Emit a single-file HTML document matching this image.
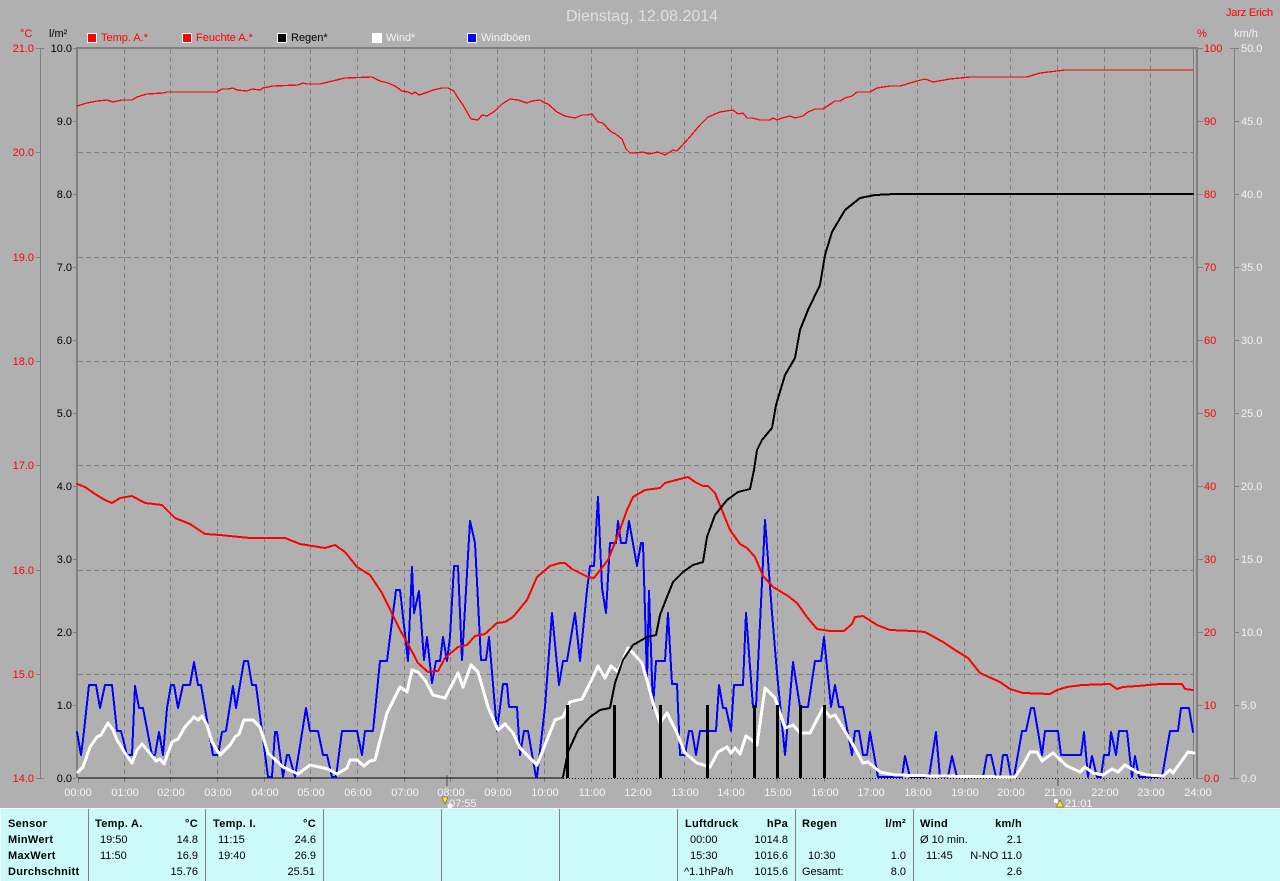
<!DOCTYPE html>
<html><head><meta charset="utf-8"><style>
html,body{margin:0;padding:0;background:#b0b0b0}
svg{display:block}
text{font-family:"Liberation Sans",sans-serif;font-size:11px}
.w{fill:#f4f4f4}.r{fill:#f00}.k{fill:#000}
.e{text-anchor:end}.b{font-weight:bold;letter-spacing:.3px}
.c{fill:none;stroke-linejoin:round;stroke-linecap:round}
</style></head><body>
<svg width="1280" height="881" viewBox="0 0 1280 881" xmlns="http://www.w3.org/2000/svg">
<rect width="1280" height="881" fill="#b0b0b0"/>
<!-- grid -->
<g stroke="#808080" stroke-width="1" stroke-dasharray="5,3" shape-rendering="crispEdges" fill="none">
<path d="M78 152.5H1193M78 257.5H1193M78 361.5H1193M78 465.5H1193M78 570.5H1193M78 674.5H1193"/>
<path d="M124.5 49V785M170.5 49V785M217.5 49V785M264.5 49V785M310.5 49V785M357.5 49V785M404.5 49V785M450.5 49V785M497.5 49V785M544.5 49V785M591.5 49V785M637.5 49V785M684.5 49V785M731.5 49V785M777.5 49V785M824.5 49V785M870.5 49V785M917.5 49V785M964.5 49V785M1010.5 49V785M1104.5 49V785M1150.5 49V785M1057.5 49V778M78.5 778V785"/>
</g>
<g fill="#808080" shape-rendering="crispEdges">
<rect x="76" y="47" width="1122" height="2"/><rect x="76" y="47" width="2" height="731"/>
<rect x="1193" y="48" width="1" height="730"/><rect x="1196" y="47" width="2" height="732"/>
<rect x="446" y="775" width="2" height="11"/><rect x="1057" y="778" width="2" height="8"/>
<rect x="40" y="48" width="1" height="730"/><rect x="1234" y="48" width="1" height="730"/>
</g>
<g stroke="#808080" stroke-width="1" shape-rendering="crispEdges" fill="none">
<path d="M36 48.5H44M36 778.5H44M36 152.5H40M36 257.5H40M36 361.5H40M36 465.5H40M36 570.5H40M36 674.5H40"/>
<path d="M73 48.5H76M73 121.5H76M73 194.5H76M73 267.5H76M73 340.5H76M73 413.5H76M73 486.5H76M73 559.5H76M73 632.5H76M73 705.5H76M73 778.5H76"/>
<path d="M1198 48.5H1203M1198 121.5H1203M1198 194.5H1203M1198 267.5H1203M1198 340.5H1203M1198 413.5H1203M1198 486.5H1203M1198 559.5H1203M1198 632.5H1203M1198 705.5H1203M1198 778.5H1203"/>
<path d="M1230 48.5H1239M1235 121.5H1239M1235 194.5H1239M1235 267.5H1239M1235 340.5H1239M1235 413.5H1239M1235 486.5H1239M1235 559.5H1239M1235 632.5H1239M1235 705.5H1239M1230 778.5H1239"/>
</g>
<!-- baseline -->
<path d="M78 778H563" stroke="#000" stroke-width="1.4" shape-rendering="crispEdges"/>
<path d="M563 778.5H1193" stroke="#000" stroke-width="1" stroke-dasharray="1,2" shape-rendering="crispEdges"/>
<!-- blue gust -->
<polyline class="c" stroke="#0000ff" stroke-width="2" shape-rendering="crispEdges" points="77,732 81,755 83,740 89,685 96,685 100,708 105,685 112,685 117,731 121,731 127,755 132,755 135,686 139,708 143,708 152,755 155,755 159,732 163,755 167,708 171,685 174,685 178,708 183,685 190,685 194,662 198,685 201,685 213,755 218,755 222,732 226,731 233,686 236,708 244,661 248,661 252,685 256,685 268,777 272,777 275,732 277,732 283,777 287,755 289,755 295,777 306,708 310,731 318,731 323,755 327,755 332,777 336,777 342,731 357,731 362,755 365,731 373,731 380,661 387,661 396,590 400,590 408,661 412,567 414,613 419,591 424,660 427,637 432,683 436,661 440,661 443,637 447,661 450,637 454,566 458,566 462,660 470,521 475,543 481,660 486,660 489,637 497,731 503,684 507,684 509,707 517,707 520,755 524,731 528,731 536,777 537,777 545,707 552,613 559,685 563,661 567,661 575,613 580,661 587,590 590,566 594,566 598,497 602,588 606,613 610,543 616,543 618,521 621,543 626,543 629,521 637,566 641,543 643,543 647,680 649,591 653,708 656,661 665,661 668,613 672,684 677,684 680,755 685,755 689,731 692,731 696,755 700,731 716,731 719,685 723,708 726,708 731,731 734,685 743,685 746,613 753,707 756,707 765,520 772,613 777,673 785,755 793,662 800,707 808,707 815,661 821,661 824,637 831,707 835,685 839,707 843,707 852,755 855,731 859,731 863,755 867,755 870,732 878,777 902,777 905,756 910,777 929,777 936,732 940,777 948,777 952,756 957,777 983,777 987,755 991,755 996,777 1000,777 1003,755 1007,755 1011,777 1014,777 1022,731 1026,731 1031,708 1034,708 1042,755 1045,731 1058,731 1061,755 1081,755 1084,732 1088,777 1092,756 1097,777 1101,777 1104,755 1109,755 1111,732 1116,755 1119,731 1127,731 1132,777 1135,756 1139,777 1162,777 1170,731 1178,731 1181,708 1189,708 1193,732"/>
<!-- white wind -->
<polyline class="c" stroke="#ffffff" stroke-width="3" shape-rendering="crispEdges" points="78,772 83,767 90,747 97,737 101,735 108,723 113,730 117,740 125,753 132,763 137,750 142,744 148,751 156,761 160,759 164,764 172,742 178,739 185,727 194,717 198,720 202,716 207,725 212,742 220,755 230,745 235,737 239,734 244,720 253,720 260,727 268,753 283,767 298,774 310,765 328,769 337,774 347,768 350,760 357,760 364,766 370,761 375,760 387,713 400,687 407,692 412,670 418,672 425,680 433,695 445,698 458,673 463,687 471,665 478,672 488,707 498,730 505,724 513,733 520,748 537,765 547,740 555,720 563,717 570,702 582,699 590,683 598,666 605,678 611,666 618,672 628,648 633,653 642,663 647,680 653,703 660,723 667,713 677,733 685,753 697,763 710,767 718,752 727,747 731,753 735,748 740,754 746,736 752,740 757,745 765,688 775,698 785,728 793,725 800,733 810,733 823,708 830,717 835,715 843,728 852,743 863,763 868,762 880,772 895,775 935,776 1015,777 1023,765 1030,752 1037,752 1042,761 1053,753 1067,766 1080,772 1085,767 1093,773 1103,775 1112,769 1118,772 1125,765 1137,772 1147,775 1163,776 1170,770 1173,773 1188,752 1194,753"/>
<!-- humidity -->
<polyline class="c" stroke="#ff0000" stroke-width="1.3" shape-rendering="crispEdges" points="77,106 87,103 97,101 107,100 113,102 122,100 132,100 137,97 147,94 163,93 167,92 217,92 222,89 228,89 233,88 237,90 247,91 252,89 260,90 263,88 273,86 298,85 303,83 307,84 320,84 345,78 372,77 380,81 388,83 395,86 402,91 408,92 412,94 415,92 419,95 428,92 433,90 442,88 448,88 454,91 458,98 463,105 471,119 478,120 482,115 487,116 495,111 502,104 510,99 518,100 527,103 532,101 540,100 545,103 548,104 557,112 565,116 575,118 582,115 587,115 592,114 598,122 603,123 610,131 617,135 622,139 626,149 630,153 635,153 643,152 649,154 658,152 665,155 673,150 677,151 688,139 700,125 708,117 720,112 733,110 738,114 743,113 747,118 752,118 760,120 770,120 773,118 777,120 782,118 790,116 795,118 803,116 808,112 815,109 823,109 835,101 840,101 845,98 852,96 857,92 863,92 870,92 877,88 890,86 900,86 917,81 925,79 933,82 950,79 970,77 1027,77 1040,73 1057,71 1065,70 1193,70"/>
<!-- temp -->
<polyline class="c" stroke="#ff0000" stroke-width="2" shape-rendering="crispEdges" points="77,484 85,487 95,494 105,500 112,503 120,498 132,496 145,503 162,505 175,518 190,524 205,534 220,535 250,538 285,538 300,544 325,548 335,545 345,552 357,567 370,575 382,593 400,630 407,642 418,663 428,672 438,671 445,658 458,647 467,645 475,636 485,634 497,623 505,622 513,617 527,600 537,577 550,566 560,563 565,563 572,569 588,577 594,578 608,560 618,535 627,510 633,497 645,490 660,488 665,483 680,479 688,477 695,482 703,486 708,486 715,493 730,530 740,544 747,548 755,557 763,576 773,587 788,596 797,603 807,617 817,629 830,631 844,631 852,624 855,617 863,616 877,625 890,630 913,631 925,632 943,642 955,650 968,658 980,673 1000,682 1010,689 1023,693 1050,694 1057,690 1067,687 1082,685 1110,684 1117,689 1123,687 1137,686 1160,684 1182,684 1185,689 1193,690"/>
<!-- rain -->
<polyline class="c" stroke="#000" stroke-width="2" shape-rendering="crispEdges" points="563,777 568,752 578,730 590,717 600,710 610,708 615,683 623,660 633,645 647,637 656,635 660,615 667,597 673,582 683,572 693,565 703,562 707,537 715,515 727,500 738,492 750,489 754,470 757,450 762,440 772,428 776,405 785,375 795,358 800,330 808,310 820,285 825,255 832,232 845,210 860,198 875,195 895,194 1193,194"/>
<g fill="#000" shape-rendering="crispEdges">
<rect x="566" y="705" width="3" height="73"/><rect x="613" y="705" width="3" height="73"/><rect x="659" y="705" width="3" height="73"/><rect x="706" y="705" width="3" height="73"/><rect x="753" y="705" width="3" height="73"/><rect x="776" y="705" width="3" height="73"/><rect x="799" y="705" width="3" height="73"/><rect x="823" y="705" width="3" height="73"/>
</g>
<!-- title -->
<text x="642" y="21" text-anchor="middle" style="font-size:16px" fill="#e0e0e0">Dienstag, 12.08.2014</text>
<text x="1226" y="16" class="r" style="letter-spacing:-.2px">Jarz Erich</text>
<text x="20" y="37" class="r">°C</text><text x="49" y="37" class="k">l/m²</text>
<text x="1197" y="37" class="r">%</text><text x="1234" y="37" class="w">km/h</text>
<!-- legend -->
<g shape-rendering="crispEdges" stroke="#fff" stroke-width="1">
<rect x="87.5" y="33.5" width="9" height="9" fill="#f00"/><rect x="182.5" y="33.5" width="9" height="9" fill="#f00"/><rect x="277.5" y="33.5" width="9" height="9" fill="#000"/><rect x="372.5" y="33.5" width="9" height="9" fill="#fff"/><rect x="467.5" y="33.5" width="9" height="9" fill="#00f"/>
</g>
<text x="101" y="41" class="r">Temp. A.*</text><text x="196" y="41" class="r">Feuchte A.*</text><text x="291" y="41" class="k">Regen*</text><text x="386" y="41" class="w">Wind*</text><text x="481" y="41" class="w">Windböen</text>
<!-- left labels -->
<g class="r">
<text x="34" y="52" class="e">21.0</text><text x="34" y="156" class="e">20.0</text><text x="34" y="261" class="e">19.0</text><text x="34" y="365" class="e">18.0</text><text x="34" y="469" class="e">17.0</text><text x="34" y="574" class="e">16.0</text><text x="34" y="678" class="e">15.0</text><text x="34" y="782" class="e">14.0</text>
</g>
<g class="k">
<text x="72" y="52" class="e">10.0</text><text x="72" y="125" class="e">9.0</text><text x="72" y="198" class="e">8.0</text><text x="72" y="271" class="e">7.0</text><text x="72" y="344" class="e">6.0</text><text x="72" y="417" class="e">5.0</text><text x="72" y="490" class="e">4.0</text><text x="72" y="563" class="e">3.0</text><text x="72" y="636" class="e">2.0</text><text x="72" y="709" class="e">1.0</text><text x="72" y="782" class="e">0.0</text>
</g>
<!-- right labels -->
<g class="r">
<text x="1204" y="52">100</text><text x="1204" y="125">90</text><text x="1204" y="198">80</text><text x="1204" y="271">70</text><text x="1204" y="344">60</text><text x="1204" y="417">50</text><text x="1204" y="490">40</text><text x="1204" y="563">30</text><text x="1204" y="636">20</text><text x="1204" y="709">10</text><text x="1204" y="782">0.0</text>
</g>
<g class="w">
<text x="1241" y="52">50.0</text><text x="1241" y="125">45.0</text><text x="1241" y="198">40.0</text><text x="1241" y="271">35.0</text><text x="1241" y="344">30.0</text><text x="1241" y="417">25.0</text><text x="1241" y="490">20.0</text><text x="1241" y="563">15.0</text><text x="1241" y="636">10.0</text><text x="1241" y="709">5.0</text><text x="1241" y="782">0.0</text>
</g>
<!-- time labels -->
<g class="w" text-anchor="middle">
<text x="78" y="796">00:00</text><text x="125" y="796">01:00</text><text x="171" y="796">02:00</text><text x="218" y="796">03:00</text><text x="265" y="796">04:00</text><text x="311" y="796">05:00</text><text x="358" y="796">06:00</text><text x="405" y="796">07:00</text><text x="451" y="796">08:00</text><text x="498" y="796">09:00</text><text x="545" y="796">10:00</text><text x="592" y="796">11:00</text><text x="638" y="796">12:00</text><text x="685" y="796">13:00</text><text x="731" y="796">14:00</text><text x="778" y="796">15:00</text><text x="825" y="796">16:00</text><text x="871" y="796">17:00</text><text x="918" y="796">18:00</text><text x="965" y="796">19:00</text><text x="1011" y="796">20:00</text><text x="1058" y="796">21:00</text><text x="1105" y="796">22:00</text><text x="1151" y="796">23:00</text><text x="1198" y="796">24:00</text>
</g>
<!-- panel -->
<rect x="0" y="808" width="1280" height="73" fill="#ccfafa"/>
<rect x="0" y="808" width="1280" height="1" fill="#f2ffff"/>
<rect x="0" y="808" width="1" height="73" fill="#f2ffff"/>
<g fill="#808080" shape-rendering="crispEdges">
<rect x="88" y="809" width="1" height="72"/><rect x="205" y="809" width="1" height="72"/><rect x="323" y="809" width="1" height="72"/><rect x="441" y="809" width="1" height="72"/><rect x="559" y="809" width="1" height="72"/><rect x="677" y="809" width="1" height="72"/><rect x="795" y="809" width="1" height="72"/><rect x="913" y="809" width="1" height="72"/>
</g>
<!-- sun markers -->
<path d="M442 797l3 7 3-7z" fill="#ffee00" stroke="#444" stroke-width=".5"/>
<circle cx="450" cy="806" r="2.500" fill="#fff"/>
<text x="449" y="807" class="w">07:55</text>
<circle cx="1056" cy="801" r="2.500" fill="#fff" stroke="#666" stroke-width=".5" stroke-dasharray="1,1"/>
<path d="M1060 800l-3.500 7h7z" fill="#ffee00" stroke="#444" stroke-width=".5"/>
<text x="1065" y="807" class="w">21:01</text>
<g class="k">
<text x="8" y="827" class="b">Sensor</text><text x="8" y="843" class="b">MinWert</text><text x="8" y="859" class="b">MaxWert</text><text x="8" y="875" class="b">Durchschnitt</text>
<text x="95" y="827" class="b">Temp. A.</text><text x="198" y="827" class="b e">°C</text>
<text x="100" y="843">19:50</text><text x="198" y="843" class="e">14.8</text>
<text x="100" y="859">11:50</text><text x="198" y="859" class="e">16.9</text>
<text x="198" y="875" class="e">15.76</text>
<text x="213" y="827" class="b">Temp. I.</text><text x="316" y="827" class="b e">°C</text>
<text x="218" y="843">11:15</text><text x="316" y="843" class="e">24.6</text>
<text x="218" y="859">19:40</text><text x="316" y="859" class="e">26.9</text>
<text x="315" y="875" class="e">25.51</text>
<text x="685" y="827" class="b">Luftdruck</text><text x="788" y="827" class="b e">hPa</text>
<text x="690" y="843">00:00</text><text x="788" y="843" class="e">1014.8</text>
<text x="690" y="859">15:30</text><text x="788" y="859" class="e">1016.6</text>
<text x="684" y="875">^1.1hPa/h</text><text x="788" y="875" class="e">1015.6</text>
<text x="802" y="827" class="b">Regen</text><text x="906" y="827" class="b e">l/m²</text>
<text x="808" y="859">10:30</text><text x="906" y="859" class="e">1.0</text>
<text x="802" y="875">Gesamt:</text><text x="906" y="875" class="e">8.0</text>
<text x="920" y="827" class="b">Wind</text><text x="1022" y="827" class="b e">km/h</text>
<text x="920" y="843">Ø 10 min.</text><text x="1022" y="843" class="e">2.1</text>
<text x="926" y="859">11:45</text><text x="1022" y="859" class="e">N-NO 11.0</text>
<text x="1022" y="875" class="e">2.6</text>
</g>
</svg>
</body></html>
